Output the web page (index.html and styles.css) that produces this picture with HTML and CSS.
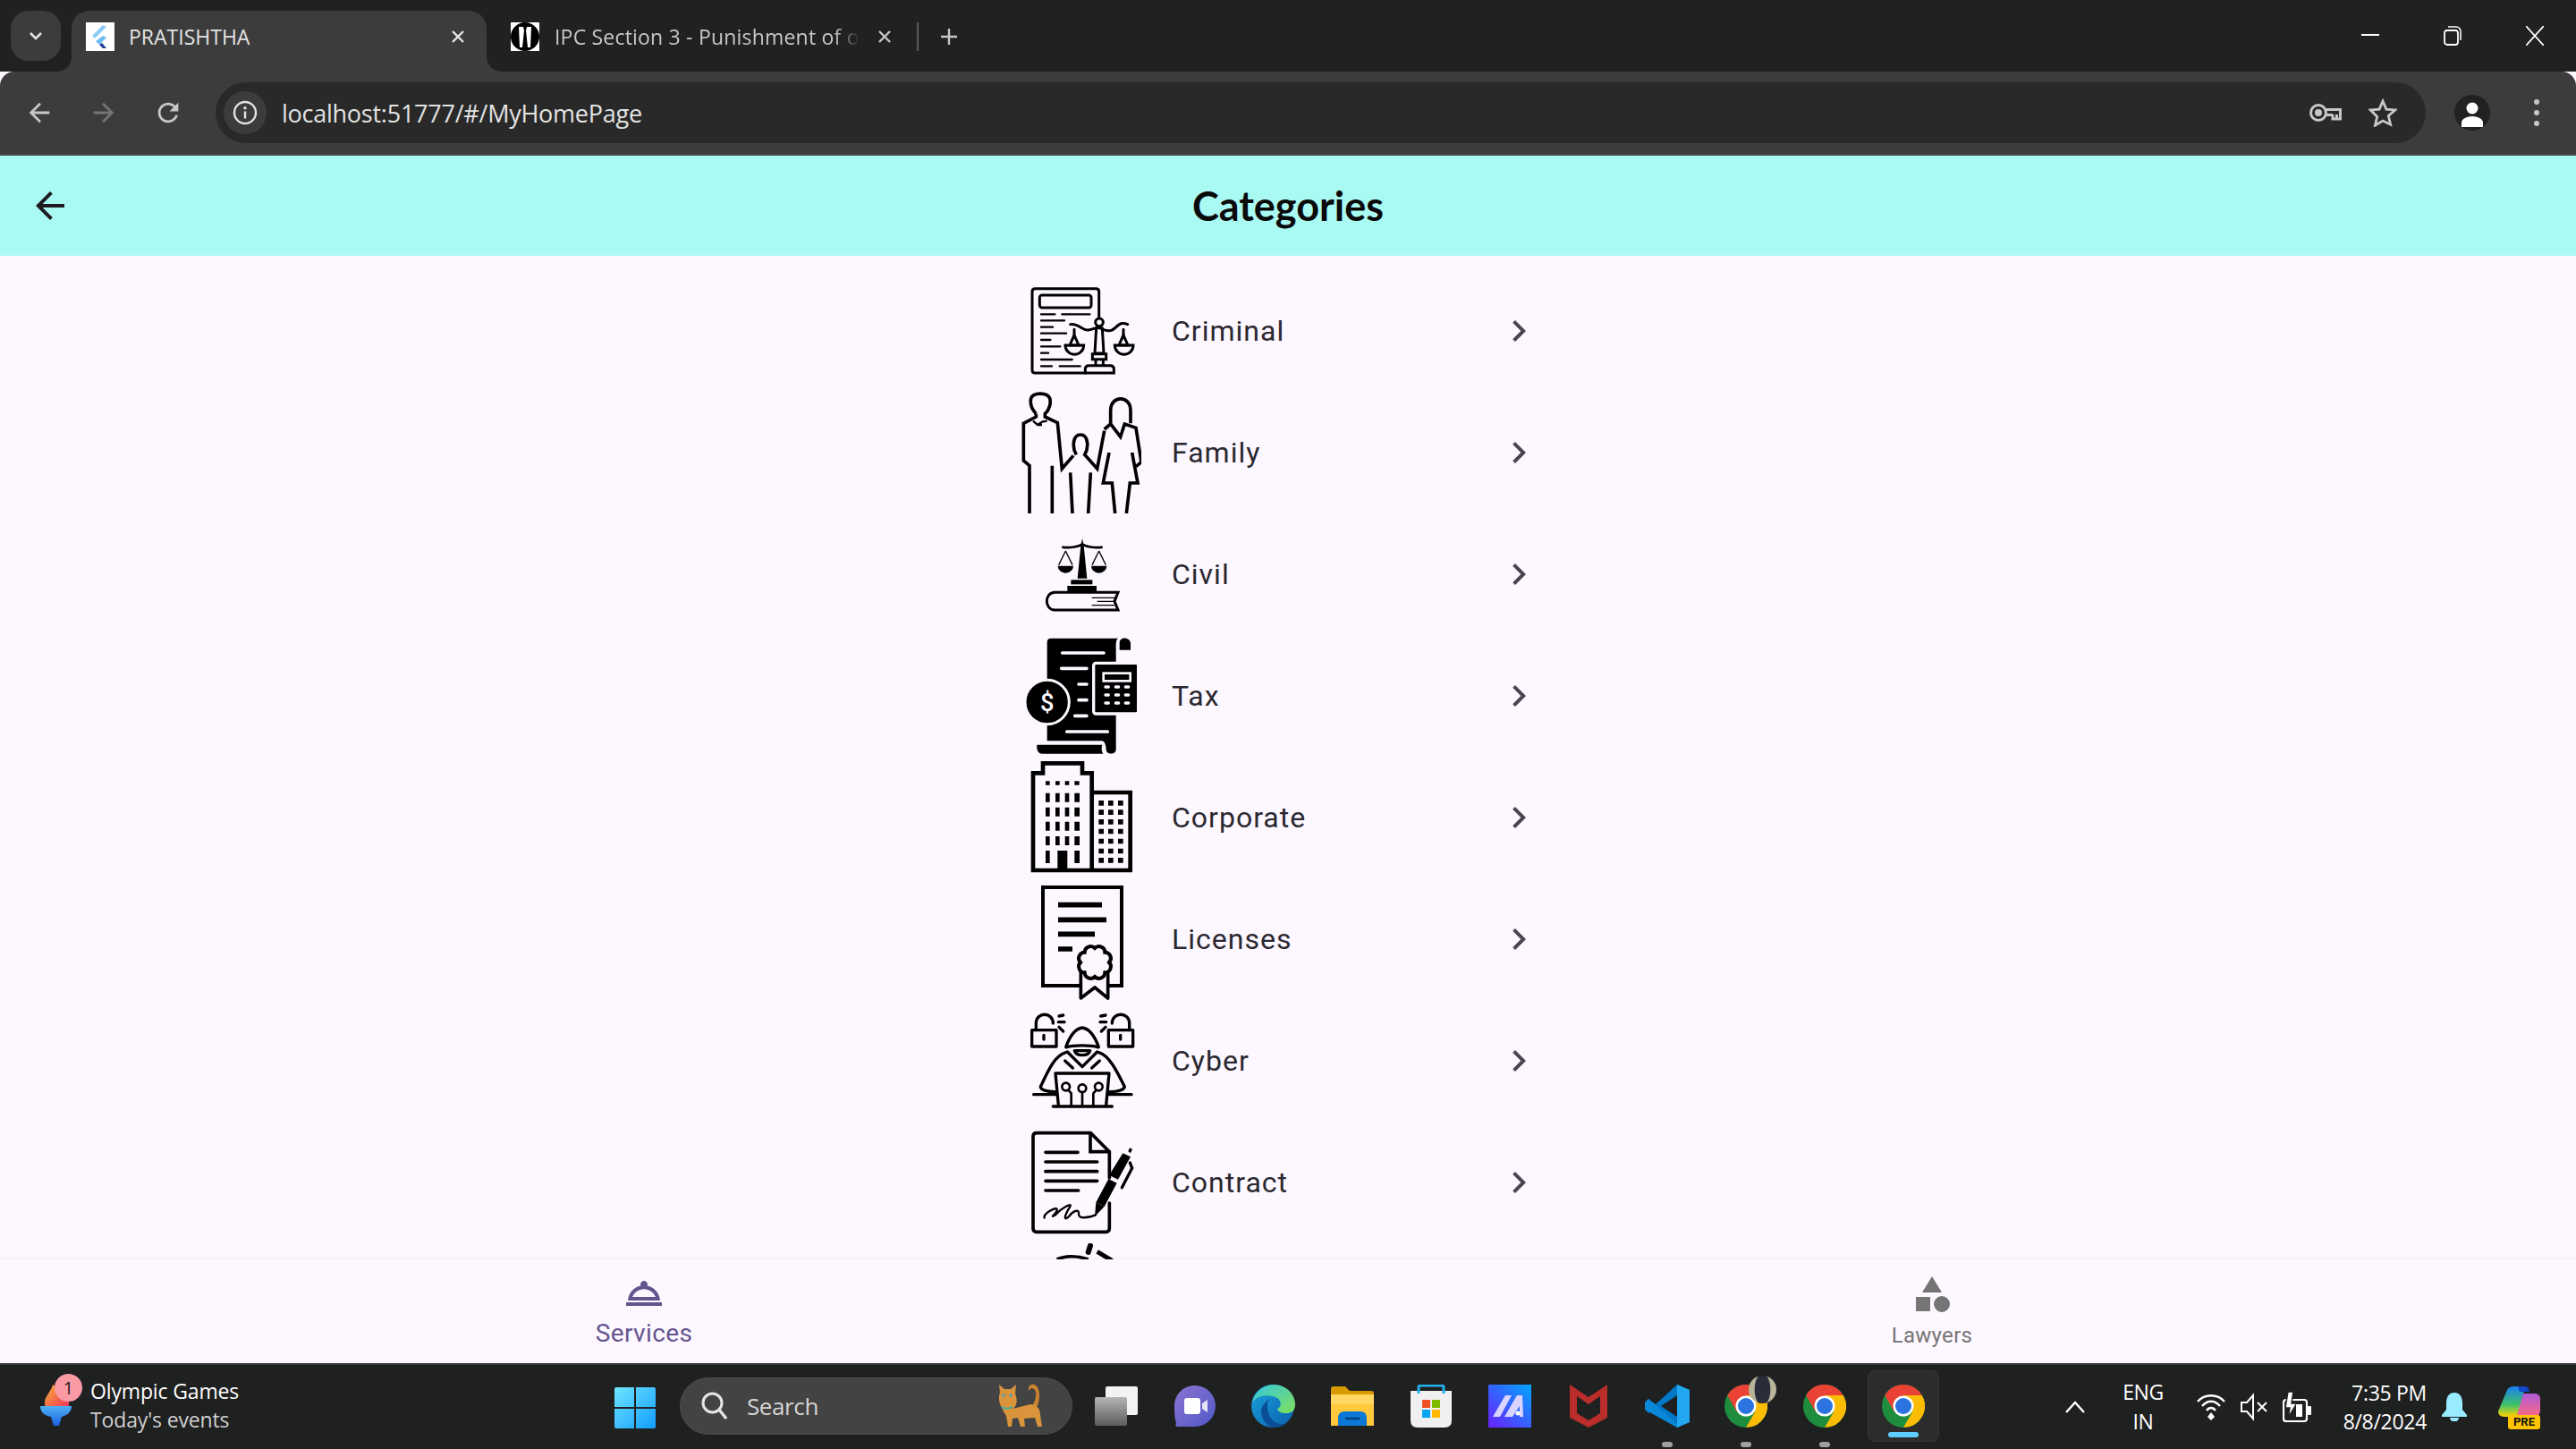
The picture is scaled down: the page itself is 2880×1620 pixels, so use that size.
FILE: index.html
```html
<!DOCTYPE html>
<html lang="en">
<head>
<meta charset="utf-8">
<title>PRATISHTHA</title>
<link rel="stylesheet" href="styles.css">
</head>
<body>
<svg class="defs" width="0" height="0" aria-hidden="true">
  <symbol id="chrome" viewBox="0 0 48 48">
    <circle cx="24" cy="24" r="24" fill="#1e8e3e"/>
    <path d="M24 24 13.6 30 3.2 12A24 24 0 0 1 44.800 12H24Z" fill="#ea4335"/>
    <path d="M24 12H44.800A24 24 0 0 1 24 48L34.400 30Z" fill="#fbbc04"/>
    <circle cx="24" cy="24" r="11.500" fill="#fff"/>
    <circle cx="24" cy="24" r="9" fill="#2a73e0"/>
  </symbol>
</svg>

<header class="tabstrip">
  <button class="tabs-menu">
    <svg width="20" height="20" viewBox="0 0 20 20"><path d="M4 7l6 6 6-6" fill="none" stroke="#e3e3e3" stroke-width="2.600"/></svg>
  </button>
  <div class="tab tab-active">
    <svg class="favicon" width="32" height="32" viewBox="0 0 32 32"><rect width="32" height="32" fill="#fff"/><path d="M19 3 7 15l3 3L23 5Z" fill="#8ccbf5"/><path d="M19 15 11 21l4 4 8-8Z" fill="#6fbcf0"/><path d="M15 25l4 4h4l-5-6Z" fill="#1c3f94"/></svg>
    <span class="tab-title">PRATISHTHA</span>
    <svg class="tab-close" width="18" height="18" viewBox="0 0 18 18"><path d="M3 3l12 12M15 3 3 15" stroke="#e3e3e3" stroke-width="2.400"/></svg>
  </div>
  <div class="tab tab-idle">
    <svg class="favicon" width="32" height="32" viewBox="0 0 32 32"><rect width="32" height="32" fill="#fff"/><circle cx="16" cy="16" r="16" fill="#000"/><path d="M9 5h5l1 4-2 19H10ZM23 5h-5l-1 4 2 19h3Z" fill="#fff"/></svg>
    <span class="tab-title tab-fade">IPC Section 3 - Punishment of o</span>
    <svg class="tab-close" width="18" height="18" viewBox="0 0 18 18"><path d="M3 3l12 12M15 3 3 15" stroke="#c7c7c7" stroke-width="2.400"/></svg>
  </div>
  <span class="tab-sep"></span>
  <svg class="new-tab" width="24" height="24" viewBox="0 0 24 24"><path d="M12 3v18M3 12h18" stroke="#c7c7c7" stroke-width="2.400"/></svg>
  <div class="win-controls">
    <svg width="20" height="20" viewBox="0 0 20 20"><path d="M0 10h20" stroke="#fff" stroke-width="2"/></svg>
    <svg width="20" height="22" viewBox="0 0 20 22"><rect x="1" y="5" width="15" height="16" rx="3" fill="none" stroke="#fff" stroke-width="1.800"/><path d="M5 1h9a5 5 0 0 1 5 5v10" fill="none" stroke="#fff" stroke-width="1.500"/></svg>
    <svg width="20" height="22" viewBox="0 0 20 22"><path d="M0 0l20 22M20 0 0 22" stroke="#fff" stroke-width="1.800"/></svg>
  </div>
</header>

<nav class="toolbar">
  <button class="tool-btn"><svg width="34" height="34" viewBox="0 0 24 24"><path d="M20 11H7.830l5.590-5.590L12 4l-8 8 8 8 1.410-1.410L7.830 13H20v-2z" fill="#c7c7c7"/></svg></button>
  <button class="tool-btn"><svg width="34" height="34" viewBox="0 0 24 24"><path d="M4 11h12.170l-5.590-5.590L12 4l8 8-8 8-1.410-1.410L16.170 13H4v-2z" fill="#757575"/></svg></button>
  <button class="tool-btn"><svg width="34" height="34" viewBox="0 0 24 24"><path d="M17.650 6.350C16.200 4.900 14.210 4 12 4c-4.420 0-7.990 3.580-7.990 8s3.570 8 7.990 8c3.730 0 6.840-2.550 7.730-6h-2.080c-.82 2.330-3.040 4-5.650 4-3.310 0-6-2.690-6-6s2.690-6 6-6c1.660 0 3.140.69 4.220 1.780L13 11h7V4l-2.350 2.350z" fill="#c7c7c7"/></svg></button>
  <div class="omnibox">
    <span class="site-chip"><svg width="28" height="28" viewBox="0 0 28 28"><circle cx="14" cy="14" r="12" fill="none" stroke="#e3e3e3" stroke-width="2.400"/><path d="M14 12.500v8" stroke="#e3e3e3" stroke-width="2.400"/><circle cx="14" cy="8.800" r="1.700" fill="#e3e3e3"/></svg></span>
    <span class="url">localhost:51777/#/MyHomePage</span>
    <svg class="omni-key" width="36" height="20" viewBox="0 0 36 20"><circle cx="10" cy="10" r="8.500" fill="none" stroke="#c7c7c7" stroke-width="3"/><circle cx="10" cy="10" r="4" fill="#c7c7c7"/><path d="M18.500 6.500H34.500V17H26V12M30.500 12V17M18.500 12.500H26" fill="none" stroke="#c7c7c7" stroke-width="3"/></svg>
    <svg class="omni-star" width="32" height="32" viewBox="0 0 32 32"><path d="M16 3l3.900 9.100 9.900.9-7.500 6.500 2.300 9.700L16 25l-8.600 5.200 2.300-9.700L2.200 13l9.900-.9Z" fill="none" stroke="#c7c7c7" stroke-width="2.800"/></svg>
  </div>
  <span class="avatar"><svg width="26" height="28" viewBox="0 0 26 28"><circle cx="13" cy="7" r="6.500" fill="#fff"/><path d="M1 28v-5c0-4 6-7 12-7s12 3 12 7v5Z" fill="#fff"/></svg></span>
  <svg class="kebab" width="6" height="30" viewBox="0 0 6 30"><circle cx="3" cy="3" r="3" fill="#c7c7c7"/><circle cx="3" cy="15" r="3" fill="#c7c7c7"/><circle cx="3" cy="27" r="3" fill="#c7c7c7"/></svg>
</nav>

<div class="appbar">
  <button class="appbar-back"><svg width="48" height="48" viewBox="0 0 24 24"><path d="M20 11H7.830l5.590-5.590L12 4l-8 8 8 8 1.410-1.410L7.830 13H20v-2z" fill="#1d1b20"/></svg></button>
  <h1 class="appbar-title">Categories</h1>
</div>

<main class="content">
  <ul class="list">
    <li class="row">
      <svg class="thumb" viewBox="120 6 408 408">
        <g fill="none" stroke="#000" stroke-width="9" stroke-linecap="round">
          <path d="M386 165V78Q386 68 376 68H172Q162 68 162 78V341Q162 351 172 351H340"/>
          <rect x="187" y="90" width="173" height="42" rx="8"/>
          <path stroke-width="7" d="M192 154H238M262 154H355M192 175H270M192 197H231M192 218H276M192 240H223M192 262H256M192 284H216M192 306H296M192 328H228M254 328H323"/>
          <path d="M290 188C320 185 330 210 350 207S375 197 388 200C410 210 425 215 440 200S465 180 482 188"/>
          <circle cx="387" cy="181" r="13"/>
          <path d="M377 200 372 285H402L397 200M364 287H410V305H364ZM375 305V325M400 305V325M340 351V338Q340 326 352 326H424Q436 326 436 338V351H340"/>
          <path d="M303 205V224M468 205V224"/>
          <path d="M303 224 288 258H318ZM468 224 453 258H483Z"/>
          <path d="M273 258H335A31 31 0 0 1 273 258ZM439 258H501A31 31 0 0 1 439 258Z"/>
        </g>
      </svg>
      <span class="row-label">Criminal</span>
      <svg class="chev" width="48" height="48" viewBox="0 0 24 24"><path d="M10 6 8.590 7.410 13.170 12l-4.580 4.590L10 18l6-6z"/></svg>
    </li>
    <li class="row">
      <svg class="thumb" viewBox="120 414 408 408">
        <g fill="none" stroke="#000" stroke-width="11">
          <path d="M175 488C158 470 155 450 158 436 165 415 212 415 221 436 225 450 222 472 205 488V498L247 518 262 672 300 628"/>
          <path d="M175 488V498L133 520V645L153 662V822M229 662V822"/>
          <path stroke-width="7" d="M165 512 180 525 197 514 212 512M180 525H195"/>
          <path d="M310 625C295 600 298 558 324 558 350 558 353 600 338 625L380 672 404 545"/>
          <path d="M290 685 297 822M358 685 350 822"/>
          <path d="M425 520V476C425 425 492 425 492 476V520"/>
          <path d="M404 540 425 522 458 565 472 522 510 535 528 650 510 665"/>
          <path d="M420 618 400 720H430L440 822M497 618 516 720H490L478 822"/>
        </g>
      </svg>
      <span class="row-label">Family</span>
      <svg class="chev" width="48" height="48" viewBox="0 0 24 24"><path d="M10 6 8.590 7.410 13.170 12l-4.580 4.590L10 18l6-6z"/></svg>
    </li>
    <li class="row">
      <svg class="thumb" viewBox="120 -18 408 408">
        <path d="M330 66 335 90 346 200H314L325 90Z"/>
        <path d="M262 95C290 100 320 92 330 85 340 92 370 100 398 95" fill="none" stroke="#000" stroke-width="8"/>
        <path d="M274 108 251 155M274 108 297 155M386 108 363 155M386 108 409 155" stroke="#000" stroke-width="4" fill="none"/>
        <path d="M248 158H300A26 24 0 0 1 248 158ZM360 158H412A26 24 0 0 1 360 158Z"/>
        <rect x="292" y="205" width="72" height="15"/>
        <rect x="280" y="225" width="98" height="18"/>
        <path d="M450 247H238C202 247 202 306 238 306H450L438 277Z" fill="none" stroke="#000" stroke-width="9"/>
        <path d="M362 265H438M380 277H438M362 290H438" stroke="#000" stroke-width="4"/>
      </svg>
      <span class="row-label">Civil</span>
      <svg class="chev" width="48" height="48" viewBox="0 0 24 24"><path d="M10 6 8.590 7.410 13.170 12l-4.580 4.590L10 18l6-6z"/></svg>
    </li>
    <li class="row">
      <svg class="thumb" viewBox="120 390 408 408">
        <path d="M225 401H450C443 405 443 420 443 430V775C443 792 410 792 410 775 410 760 405 745 395 745H212V414Q212 401 225 401Z"/>
        <path d="M455 440V415C455 395 492 395 492 420V440Z"/>
        <path d="M178 758H397C393 770 395 780 400 788H195C183 788 176 775 178 758Z"/>
        <path d="M263 450H402M260 502H345M318 555H345M318 608H345M305 661H345M278 714H415" stroke="#fdf7ff" stroke-width="11" stroke-linecap="round"/>
        <circle cx="212" cy="615" r="74" stroke="#fdf7ff" stroke-width="9"/>
        <text class="dollar" x="212" y="644" text-anchor="middle">$</text>
        <rect x="368" y="484" width="150" height="170" rx="8" stroke="#fdf7ff" stroke-width="10"/>
        <rect x="401" y="518" width="90" height="26" stroke="#fdf7ff" stroke-width="8"/>
        <path d="M408 564H418M442 564H452M475 564H485M408 591H418M442 591H452M475 591H485M408 618H418M442 618H452M475 618H485" stroke="#fdf7ff" stroke-width="10" stroke-linecap="round"/>
      </svg>
      <span class="row-label">Tax</span>
      <svg class="chev" width="48" height="48" viewBox="0 0 24 24"><path d="M10 6 8.590 7.410 13.170 12l-4.580 4.590L10 18l6-6z"/></svg>
    </li>
    <li class="row">
      <svg class="thumb" viewBox="120 798 408 408">
        <path d="M165 1179V853H198V820H330V853H362V1179ZM362 918H491V1179H362" fill="none" stroke="#000" stroke-width="14"/>
        <path d="M207 880h14v13h-14zM240 880h14v13h-14zM272 880h14v13h-14zM304 880h16v13h-16zM207 920h14v30h-14zM240 920h14v30h-14zM272 920h14v30h-14zM304 920h17v30h-17zM207 968h14v30h-14zM240 968h14v30h-14zM272 968h14v30h-14zM304 968h17v30h-17zM207 1016h14v30h-14zM240 1016h14v30h-14zM272 1016h14v30h-14zM304 1016h17v30h-17zM207 1065h14v30h-14zM240 1065h14v30h-14zM272 1065h14v30h-14zM304 1065h17v30h-17zM207 1113h14v42h-14zM304 1113h17v42h-17zM247 1113h33v62h-33z"/>
        <path d="M385 945h17v17h-17zM417 945h17v17h-17zM450 945h17v17h-17zM385 976h17v17h-17zM417 976h17v17h-17zM450 976h17v17h-17zM385 1008h17v17h-17zM417 1008h17v17h-17zM450 1008h17v17h-17zM385 1040h17v17h-17zM417 1040h17v17h-17zM450 1040h17v17h-17zM385 1073h17v17h-17zM417 1073h17v17h-17zM450 1073h17v17h-17zM385 1106h17v17h-17zM417 1106h17v17h-17zM450 1106h17v17h-17zM385 1137h17v17h-17zM417 1137h17v17h-17zM450 1137h17v17h-17z"/>
      </svg>
      <span class="row-label">Corporate</span>
      <svg class="chev" width="48" height="48" viewBox="0 0 24 24"><path d="M10 6 8.590 7.410 13.170 12l-4.580 4.590L10 18l6-6z"/></svg>
    </li>
    <li class="row">
      <svg class="thumb" viewBox="120 36 408 408">
        <rect x="198" y="66" width="264" height="330" fill="none" stroke="#000" stroke-width="12"/>
        <path d="M249 125H396M249 175H411M249 223H372M249 273H297" stroke="#000" stroke-width="17"/>
        <path d="M325 345V438L372 402 416 438V345" fill="#fdf7ff" stroke="#000" stroke-width="11" stroke-linejoin="round"/>
        <path d="M420 318A20 20 0 0 1 406 352 20 20 0 0 1 372 366 20 20 0 0 1 338 352 20 20 0 0 1 324 318 20 20 0 0 1 338 284 20 20 0 0 1 372 270 20 20 0 0 1 406 284 20 20 0 0 1 420 318Z" fill="#fdf7ff" stroke="#000" stroke-width="12"/>
      </svg>
      <span class="row-label">Licenses</span>
      <svg class="chev" width="48" height="48" viewBox="0 0 24 24"><path d="M10 6 8.590 7.410 13.170 12l-4.580 4.590L10 18l6-6z"/></svg>
    </li>
    <li class="row">
      <svg class="thumb" viewBox="120 444 408 408">
        <g fill="none" stroke="#000" stroke-width="10" stroke-linecap="round" stroke-linejoin="round">
          <rect x="161" y="545" width="82" height="55"/>
          <rect x="418" y="545" width="82" height="55"/>
          <path d="M175 545V522C175 483 232 483 232 522M430 522C430 483 488 483 488 522V545"/>
          <path d="M252 498 266 495M250 518H270M252 535 266 549M408 495 392 498M410 518H390M408 535 394 549"/>
          <path d="M201 562V576M458 562V576"/>
          <path d="M275 602C290 560 310 540 330 537 350 540 370 560 385 602"/>
          <path d="M278 602C300 595 360 595 382 602M304 614H356C350 634 310 634 304 614Z"/>
          <path d="M280 618 330 668 380 618M272 648 298 672M388 648 362 672"/>
          <path d="M275 620C240 630 220 670 190 735 190 745 210 752 240 752M385 620C420 630 445 680 472 735 470 745 450 752 420 752"/>
          <path d="M240 690H420L410 797M240 690 250 797M167 761H240M420 761H495M232 801H430"/>
          <circle cx="275" cy="735" r="13" stroke-width="8"/><circle cx="330" cy="740" r="13" stroke-width="8"/><circle cx="385" cy="735" r="13" stroke-width="8"/>
          <path d="M293 797V757L285 748M330 753V797M367 797V757L375 748" stroke-width="8"/>
        </g>
      </svg>
      <span class="row-label">Cyber</span>
      <svg class="chev" width="48" height="48" viewBox="0 0 24 24"><path d="M10 6 8.590 7.410 13.170 12l-4.580 4.590L10 18l6-6z"/></svg>
    </li>
    <li class="row">
      <svg class="thumb" viewBox="120 852 408 408">
        <g fill="none" stroke="#000" stroke-width="11" stroke-linecap="round">
          <path d="M421 1125V1210Q421 1222 409 1222H177Q165 1222 165 1210V902Q165 890 177 890H358L421 953V1040"/>
          <path d="M357 892V953H421"/>
          <path d="M207 955H315M207 987H380M207 1019H380M207 1051H380M207 1083H317"/>
          <path stroke-width="7" d="M203 1175C198 1160 240 1138 245 1145 250 1155 215 1180 240 1165 260 1140 295 1125 290 1135 265 1175 270 1185 285 1170 300 1150 320 1145 318 1160 315 1180 350 1175 375 1165"/>
          <path d="M490 990 497 1008 463 1073" stroke-width="10"/>
        </g>
        <path d="M466 958 492 970 450 1046 420 1032ZM484 952l5-12 9 4-6 14ZM418 1044 446 1058 404 1137 376 1123Z"/>
        <path d="M376 1123 404 1137 372 1170Z"/>
      </svg>
      <span class="row-label">Contract</span>
      <svg class="chev" width="48" height="48" viewBox="0 0 24 24"><path d="M10 6 8.590 7.410 13.170 12l-4.580 4.590L10 18l6-6z"/></svg>
    </li>
    <li class="row">
      <svg class="thumb" viewBox="-60 30 408 408">
        <path d="M65 84C90 72 130 70 170 84" fill="none" stroke="#000" stroke-width="11"/>
        <path d="M177 38 170 60" stroke="#000" stroke-width="18" stroke-linecap="round"/>
        <path d="M200 58 250 88" stroke="#000" stroke-width="15"/>
      </svg>
    </li>
  </ul>
</main>

<footer class="bottomnav">
  <div class="nav-item nav-on">
    <svg width="48" height="48" viewBox="0 0 24 24"><path d="M18.980 17H2v2h20v-2zM21 16c-.27-4.070-3.250-7.400-7.160-8.210.1-.24.16-.51.16-.79 0-1.100-.9-2-2-2s-2 .9-2 2c0 .28.06.55.16.79C6.250 8.600 3.270 11.930 3 16h18zm-9-6.420c2.950 0 5.470 1.830 6.500 4.420h-13c1.030-2.590 3.550-4.420 6.500-4.420z" fill="#65558f"/></svg>
    <span class="nav-label">Services</span>
  </div>
  <div class="nav-item nav-off">
    <svg width="48" height="48" viewBox="0 0 24 24"><path d="M12 2l-5.500 9h11zM17.500 13a4.500 4.500 0 1 0 0 9 4.500 4.500 0 1 0 0-9zM3 13.500h8v8H3z" fill="#757575"/></svg>
    <span class="nav-label">Lawyers</span>
  </div>
</footer>

<div class="taskbar">
  <div class="widget">
    <span class="widget-icon">
      <svg width="36" height="48" viewBox="0 0 36 48"><defs><linearGradient id="flame" x1="0" y1="0" x2="1" y2="1"><stop offset="0" stop-color="#f9b233"/><stop offset="1" stop-color="#f0345e"/></linearGradient><linearGradient id="torch" x1="0" y1="0" x2="0" y2="1"><stop offset="0" stop-color="#4fb0f5"/><stop offset="1" stop-color="#1a62e0"/></linearGradient></defs><path d="M6 26C2 16 12 10 14 1c12 6 20 14 18 25Z" fill="url(#flame)"/><path d="M0 25H35C35 33 28 36 24 37L21 47H15L12 37C6 36 0 33 0 25Z" fill="url(#torch)"/></svg>
      <span class="badge">1</span>
    </span>
    <span class="widget-text"><span class="widget-title">Olympic Games</span><span class="widget-sub">Today's events</span></span>
  </div>
  <div class="start">
    <svg width="46" height="46" viewBox="0 0 46 46"><defs><linearGradient id="winb" x1="0" y1="0" x2="1" y2="1"><stop offset="0" stop-color="#6fe4ff"/><stop offset="1" stop-color="#119dff"/></linearGradient></defs><path d="M0 2Q0 0 2 0H22V22H0ZM24 0H44Q46 0 46 2V22H24ZM0 24H22V46H2Q0 46 0 44ZM24 24H46V44Q46 46 44 46H24Z" fill="url(#winb)"/></svg>
  </div>
  <div class="searchbox">
    <svg width="30" height="32" viewBox="0 0 30 32"><circle cx="12.500" cy="12.500" r="10.500" fill="none" stroke="#e6e6e6" stroke-width="3"/><path d="M20 20l8 10" stroke="#e6e6e6" stroke-width="3.400"/></svg>
    <span class="search-text">Search</span>
    <svg class="search-cat" width="58" height="50" viewBox="0 0 58 50"><path d="M48 25C52 14 50 2 44 1c-5-1-7 4-6 7 1-3 5-4 7-1 3 5 0 13-3 18Z" fill="#c9822e"/><path d="M6 10 5 1l6 5h7l6-5-1 10c3 8 2 14-3 17l20-5c8 0 11 6 11 12l2 13h-5l-3-10-12 1 1 9h-5l-3-10-6 1-1 9h-4l-2-12C6 25 3 17 6 10Z" fill="#d9943c"/><circle cx="10" cy="13" r="1.600" fill="#2ea6c9"/><circle cx="18" cy="13" r="1.600" fill="#2ea6c9"/><path d="M8 26c3 2 8 2 12 0" stroke="#29b5a8" stroke-width="1.800" fill="none"/></svg>
  </div>
  <div class="apps">
    <div class="app">
      <svg width="48" height="44" viewBox="0 0 48 44"><defs><linearGradient id="tv" x1="0" y1="0" x2="0" y2="1"><stop offset="0" stop-color="#b5b5b5"/><stop offset="1" stop-color="#5c5c5c"/></linearGradient></defs><rect x="12" width="36" height="32" rx="2" fill="#f3f3f3"/><rect y="12" width="36" height="32" rx="2" fill="url(#tv)"/></svg>
    </div>
    <div class="app">
      <svg width="46" height="46" viewBox="0 0 46 46"><defs><linearGradient id="meet" x1="0" y1="0" x2="1" y2="1"><stop offset="0" stop-color="#8c73cf"/><stop offset="1" stop-color="#5059c9"/></linearGradient></defs><path d="M23 0A23 23 0 0 1 23 46H4C1 46 1 44 2 42 0 36 0 30 0 23 0 10 10 0 23 0Z" fill="url(#meet)"/><rect x="11" y="14" width="18" height="18" rx="3" fill="#fff"/><path d="M31 20l6-4V30l-6-4Z" fill="#e8e4f7"/></svg>
    </div>
    <div class="app">
      <svg width="50" height="48" viewBox="0 0 50 48"><defs><linearGradient id="edge1" x1="0" y1="0" x2="1" y2="1"><stop offset="0" stop-color="#36c7e0"/><stop offset="1" stop-color="#7fe05a"/></linearGradient><linearGradient id="edge2" x1="0" y1="0" x2="1" y2="1"><stop offset="0" stop-color="#1ba3d8"/><stop offset="1" stop-color="#0b5fb0"/></linearGradient></defs><circle cx="24" cy="24" r="24" fill="url(#edge2)"/><path d="M1 20C4 8 14 0 25 0c14 0 25 11 24 24-1 6-5 8-10 8-6 0-9-2-10-5 4-1 6-8 0-12C20 10 6 12 1 20Z" fill="url(#edge1)"/><path d="M18 24c0 12 8 22 20 20-4 3-9 4-14 4-6-1-13-10-13-18 0-5 4-11 9-13-2 2-2 5-2 7Z" fill="#0a4f96"/></svg>
    </div>
    <div class="app">
      <svg width="48" height="44" viewBox="0 0 48 44"><path d="M0 3Q0 0 3 0H16L21 5H45Q48 5 48 8V12H0Z" fill="#d99a00"/><path d="M0 9H48V44H0Z" fill="#ffc83d"/><path d="M0 9H48V20H0Z" fill="#ffd862"/><path d="M8 44V36Q8 28 15 28H33Q40 28 40 36V44Z" fill="#0a78d4"/><path d="M16 36H32" stroke="#063f80" stroke-width="2.500"/></svg>
    </div>
    <div class="app">
      <svg width="46" height="48" viewBox="0 0 46 48"><path d="M0 7H46V40Q46 48 38 48H8Q0 48 0 40Z" fill="#f0f0f0"/><path d="M9 10V3Q9 1 11 1H35Q37 1 37 3V10" fill="none" stroke="#1eb1ee" stroke-width="3"/><rect x="13" y="17" width="9" height="9" fill="#f25022"/><rect x="24" y="17" width="9" height="9" fill="#7fba00"/><rect x="13" y="28" width="9" height="9" fill="#00a4ef"/><rect x="24" y="28" width="9" height="9" fill="#ffb900"/></svg>
    </div>
    <div class="app">
      <svg width="48" height="48" viewBox="0 0 48 48"><defs><linearGradient id="tile" x1="0" y1="1" x2="1" y2="0"><stop offset="0" stop-color="#6a1fff"/><stop offset="1" stop-color="#00a5ff"/></linearGradient></defs><rect width="48" height="48" fill="url(#tile)"/><path d="M5 36 19 12H26L13 36ZM18 36 32 12H38L39 36H35V24L27 36Z" fill="#d8d4ff"/><circle cx="33" cy="32" r="2.500" fill="#fff"/></svg>
    </div>
    <div class="app">
      <svg width="42" height="48" viewBox="0 0 42 48"><path d="M0 0 21 14 42 0V37L21 48 0 37ZM8 13V32L21 40 34 32V13L21 22Z" fill="#b92d2b" fill-rule="evenodd"/></svg>
    </div>
    <div class="app">
      <svg width="50" height="48" viewBox="0 0 50 48"><path d="M36 0 50 6V42L36 48 12 26 4 32 0 28V20L4 16 12 22Z" fill="#0078c8"/><path d="M36 0 50 6V42L36 48Z" fill="#22a7f0"/><path d="M36 12V36L18 24Z" fill="#1f1f1f"/><path d="M4 16 36 44V48L0 28V20Z" fill="#0a87d6"/></svg>
    </div>
    <div class="app app-open">
      <svg width="48" height="48"><use href="#chrome"/></svg>
      <span class="profile-pic"></span>
    </div>
    <div class="app app-open"><svg width="48" height="48"><use href="#chrome"/></svg></div>
    <div class="app app-active"><svg width="48" height="48"><use href="#chrome"/></svg></div>
  </div>
  <div class="tray">
    <svg class="tray-up" width="22" height="14" viewBox="0 0 22 14"><path d="M1 13 11 2l10 11" fill="none" stroke="#fff" stroke-width="2.400"/></svg>
    <span class="lang"><span>ENG</span><span>IN</span></span>
    <svg class="tray-wifi" width="32" height="32" viewBox="0 0 32 32"><g fill="none" stroke="#fff" stroke-width="2.400"><path d="M1 10C9 1 23 1 31 10M6 15C12 8 20 8 26 15M11 20C14 16 18 16 21 20"/></g><path d="M16 22l4 5-4 4-4-4Z" fill="#fff"/></svg>
    <svg class="tray-spk" width="32" height="32" viewBox="0 0 32 32"><path d="M2 11H8L15 3V29L8 21H2Z" fill="none" stroke="#fff" stroke-width="2"/><path d="M20 11l10 10M30 11 20 21" stroke="#fff" stroke-width="2"/></svg>
    <svg class="tray-batt" width="32" height="36" viewBox="0 0 32 36"><rect x="1" y="10" width="26" height="24" rx="3" fill="none" stroke="#fff" stroke-width="2.200"/><rect x="28" y="17" width="4" height="10" rx="1" fill="#fff"/><path d="M6 1 3 19H8L6 30 16 14H10L12 1Z" fill="#fff" stroke="#1f2020" stroke-width="1.500"/><rect x="15" y="15" width="7" height="14" fill="#fff"/></svg>
    <span class="clock"><span>7:35 PM</span><span>8/8/2024</span></span>
    <svg class="tray-bell" width="28" height="32" viewBox="0 0 28 32"><path d="M14 0C7 0 5 6 5 12V19L0 25V27H28V25L23 19V12C23 6 21 0 14 0Z" fill="#99ebff"/><path d="M9 28H19C19 34 9 34 9 28Z" fill="#99ebff"/></svg>
    <span class="copilot">
      <svg width="47" height="46" viewBox="0 0 47 46"><defs><linearGradient id="cop1" x1="0" y1="0" x2="0" y2="1"><stop offset="0" stop-color="#1a7ff0"/><stop offset=".6" stop-color="#3ec26a"/><stop offset="1" stop-color="#ffd400"/></linearGradient><linearGradient id="cop2" x1="0" y1="0" x2="0" y2="1"><stop offset="0" stop-color="#b05ad8"/><stop offset="1" stop-color="#ff6a7a"/></linearGradient></defs><path d="M10 4Q12 0 18 0H30L22 34H8Q0 34 0 28Z" fill="url(#cop1)"/><path d="M22 0H30Q34 0 35 6H24Z" fill="#1146c9"/><path d="M28 8H42Q47 9 47 14V28Q45 36 38 36H20Z" fill="url(#cop2)"/></svg>
      <span class="pre">PRE</span>
    </span>
  </div>
</div>
</body>
</html>
```

FILE: styles.css
```css
* { box-sizing: border-box; }
html, body { margin: 0; padding: 0; }
body {
  width: 2880px;
  height: 1620px;
  overflow: hidden;
  display: flex;
  flex-direction: column;
  background: #fdf7ff;
  font-family: "Roboto", "Liberation Sans", sans-serif;
}
button { border: 0; background: none; padding: 0; display: flex; align-items: center; justify-content: center; }
svg { display: block; flex: none; }
.defs { position: absolute; }

/* tab strip */
.tabstrip {
  height: 80px;
  flex: none;
  background: #202222;
  display: flex;
  align-items: flex-start;
  padding-left: 12px;
  font-family: "Open Sans", "Noto Sans", sans-serif;
}
.tabs-menu { width: 56px; height: 56px; margin-top: 12px; border-radius: 20px; background: #3c3c3c; }
.tab { height: 68px; margin-top: 12px; display: flex; align-items: center; padding-bottom: 10px; position: relative; }
.tab-active {
  width: 464px;
  margin-left: 12px;
  padding-left: 16px;
  background: #3c3c3c;
  border-radius: 20px 20px 0 0;
}
.tab-active::before, .tab-active::after {
  content: "";
  position: absolute;
  bottom: 0;
  width: 16px;
  height: 16px;
}
.tab-active::before { left: -16px; background: radial-gradient(circle at 0 0, transparent 15.500px, #3c3c3c 16px); }
.tab-active::after { right: -16px; background: radial-gradient(circle at 100% 0, transparent 15.500px, #3c3c3c 16px); }
.tab-idle { width: 478px; padding-left: 27px; }
.tab-title { font-size: 23px; margin-left: 16px; color: #e3e3e3; letter-spacing: 0; white-space: nowrap; }
.tab-close { margin-left: auto; margin-right: 23px; }
.tab-idle .tab-title { color: #c7c7c7; margin-left: 17px; letter-spacing: .2px; }
.tab-fade {
  -webkit-mask-image: linear-gradient(90deg, #000 92%, transparent 100%);
  mask-image: linear-gradient(90deg, #000 92%, transparent 100%);
}
.tab-idle .tab-close { margin-right: 24px; }
.tab-sep { width: 2px; height: 32px; margin: 25px 0 0 3px; background: #5a5a5a; }
.new-tab { margin: 29px 0 0 22px; }
.win-controls { margin-left: auto; margin-top: 29px; margin-right: 36px; display: flex; gap: 72px; }

/* toolbar */
.toolbar {
  height: 94px;
  flex: none;
  background: #3c3c3c;
  border-radius: 16px 16px 0 0;
  border-bottom: 2px solid #474747;
  display: flex;
  align-items: center;
  padding: 0 0 0 8px;
}
.tool-btn { width: 72px; height: 48px; }
.omnibox {
  width: 2471px;
  height: 68px;
  margin-left: 17px;
  border-radius: 34px;
  background: #292929;
  display: flex;
  align-items: center;
  padding-left: 9px;
}
.site-chip { width: 48px; height: 48px; border-radius: 50%; background: #3c3c3c; display: flex; align-items: center; justify-content: center; }
.url { margin-left: 17px; font-family: "Open Sans", "Noto Sans", sans-serif; font-size: 27px; color: #e3e3e3; letter-spacing: -.25px; }
.omni-key { margin-left: auto; }
.omni-star { margin-left: 30px; margin-right: 32px; }
.avatar { width: 40px; height: 40px; margin-left: 32px; border-radius: 50%; background: #202222; display: flex; align-items: center; justify-content: center; overflow: hidden; padding-top: 4px; }
.kebab { margin-left: 49px; }

/* app bar */
.appbar {
  height: 112px;
  flex: none;
  background: #aafaf4;
  display: flex;
  align-items: center;
  justify-content: center;
  position: relative;
}
.appbar-back { position: absolute; left: 32px; top: 32px; }
.appbar-title { margin: 0; font-family: "Lato", "Inter", sans-serif; font-weight: 700; font-size: 45px; color: #0a0a0a; line-height: 1; }

/* list */
.content { flex: 1; min-height: 0; overflow: hidden; padding-top: 16px; }
.list { list-style: none; margin: 0 auto; padding: 0; width: 600px; }
.row { height: 136px; display: flex; align-items: center; }
.thumb { width: 136px; height: 136px; }
.row-label { margin-left: 34px; margin-top: -1px; font-size: 32px; letter-spacing: 1px; color: #2a2830; }
.chev { margin-left: auto; margin-right: 18px; fill: #49454f; }
.dollar { font-family: "Roboto", sans-serif; font-size: 82px; font-weight: 500; fill: #fdf7ff; }

/* bottom navigation */
.bottomnav {
  height: 116px;
  flex: none;
  display: flex;
  background: #fdf7ff;
  box-shadow: 0 -2px 4px rgba(0, 0, 0, .04);
  position: relative;
}
.nav-item { flex: 1; display: flex; flex-direction: column; align-items: center; }
.nav-on { padding-top: 14px; color: #65558f; font-size: 28px; letter-spacing: .4px; }
.nav-off { padding-top: 15px; color: #757575; font-size: 24px; letter-spacing: .3px; }
.nav-label { line-height: 30px; margin-top: 6px; }
.nav-off .nav-label { margin-top: 7px; }

/* taskbar */
.taskbar {
  height: 96px;
  flex: none;
  background: #1f2020;
  border-top: 2px solid #3b3b3b;
  display: flex;
  align-items: flex-start;
  font-family: "Open Sans", "Noto Sans", sans-serif;
  color: #fff;
}
.widget { width: 666px; height: 94px; padding-left: 45px; display: flex; }
.widget-icon { position: relative; margin-top: 21px; width: 56px; }
.badge {
  position: absolute;
  left: 16px;
  top: -11px;
  width: 31px;
  height: 31px;
  border-radius: 50%;
  background: #f99aa5;
  color: #1a1a1a;
  font-size: 20px;
  line-height: 31px;
  text-align: center;
}
.widget-text { display: flex; flex-direction: column; font-size: 23px; letter-spacing: -.15px; line-height: 32px; padding-top: 13px; }
.widget-sub { color: #cfcfcf; }
.start { width: 88px; height: 94px; display: flex; align-items: center; justify-content: center; padding-top: 1px; }
.searchbox {
  width: 439px;
  height: 64px;
  margin: 14px 5px 0 6px;
  padding-left: 23px;
  border-radius: 32px;
  background: #434343;
  border: 1px solid #4c4c4c;
  display: flex;
  align-items: center;
}
.search-text { margin-left: 21px; font-size: 26px; letter-spacing: -.4px; color: #d4d4d4; }
.search-cat { margin-left: auto; margin-right: 28px; }
.apps { display: flex; }
.app { width: 88px; height: 80px; margin-top: 6px; position: relative; display: flex; align-items: center; justify-content: center; }
.app:nth-child(8)::after, .app-open::after {
  content: "";
  position: absolute;
  left: 38px;
  bottom: -6px;
  width: 12px;
  height: 6px;
  border-radius: 3px;
  background: #a0a0a0;
}
.app-active { background: #2c2c2c; border: 1px solid #363636; border-radius: 8px; width: 80px; margin-left: 4px; margin-right: 4px; }
.app-active::after {
  content: "";
  position: absolute;
  left: 22px;
  bottom: 4px;
  width: 34px;
  height: 6px;
  border-radius: 3px;
  background: #60cdff;
}
.profile-pic {
  position: absolute;
  left: 47px;
  top: 6px;
  width: 31px;
  height: 31px;
  border-radius: 50%;
  background: radial-gradient(ellipse 30% 60% at center, #2a2c38 0 90%, #b8b49a 100%);
}
.tray { display: flex; align-items: center; height: 94px; position: relative; }
.tray-up { margin-left: 137px; margin-top: -1px; }
.lang { width: 96px; display: flex; flex-direction: column; align-items: center; margin-left: 17px; font-size: 23px; line-height: 33px; letter-spacing: -.4px; }
.tray-wifi { margin-left: 12px; }
.tray-spk { margin-left: 16px; }
.tray-batt { margin-left: 16px; }
.clock { width: 129px; display: flex; flex-direction: column; align-items: flex-end; font-size: 23px; line-height: 32px; letter-spacing: -.3px; margin-top: -1px; }
.tray-bell { margin-left: 17px; }
.copilot { position: relative; margin-left: 35px; }
.pre {
  position: absolute;
  right: 0;
  bottom: -2px;
  width: 36px;
  height: 16px;
  border-radius: 3px;
  background: #ffc400;
  color: #111;
  font-family: "Roboto", sans-serif;
  font-size: 13px;
  font-weight: 700;
  line-height: 16px;
  text-align: center;
}
```
